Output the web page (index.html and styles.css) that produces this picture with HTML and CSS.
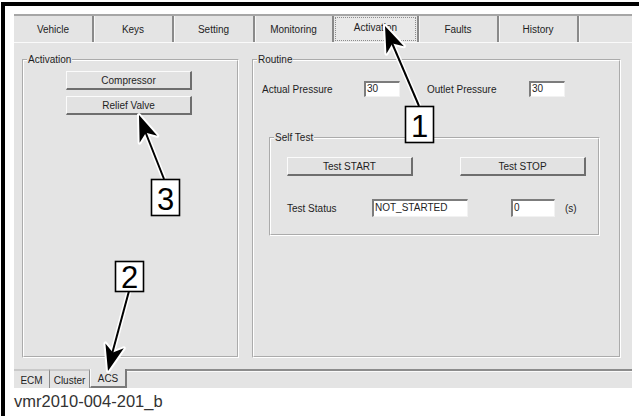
FILE: index.html
```html
<!DOCTYPE html>
<html>
<head>
<meta charset="utf-8">
<link rel="stylesheet" href="styles.css">
</head>
<body>
<div class="figure">
  <div class="window">
    <div class="tabs">
      <div class="tab w80">Vehicle</div>
      <div class="tab w80">Keys</div>
      <div class="tab w81">Setting</div>
      <div class="tab w79">Monitoring</div>
      <div class="tab w85 active"><span class="focus">Activation</span></div>
      <div class="tab w80">Faults</div>
      <div class="tab w80">History</div>
      <div class="tab-fill"></div>
    </div>
    <div class="page">
      <fieldset class="group group-left">
        <legend>Activation</legend>
        <div class="group-body left-body">
          <button class="btn btn-wide">Compressor</button>
          <button class="btn btn-wide">Relief Valve</button>
        </div>
      </fieldset>
      <fieldset class="group group-right">
        <legend>Routine</legend>
        <div class="group-body right-body">
          <div class="row">
            <span class="label lbl-pressure">Actual Pressure</span>
            <span class="field f36">30</span>
            <span class="label lbl-pressure gap27">Outlet Pressure</span>
            <span class="field f36">30</span>
          </div>
          <fieldset class="group selftest">
            <legend>Self Test</legend>
            <div class="group-body self-body">
              <div class="row btn-row">
                <button class="btn btn-wide">Test START</button>
                <button class="btn btn-wide">Test STOP</button>
              </div>
              <div class="row status-row">
                <span class="label lbl-status">Test Status</span>
                <span class="field f96 tall">NOT_STARTED</span>
                <span class="field f44 tall gap43">0</span>
                <span class="label unit">(s)</span>
              </div>
            </div>
          </fieldset>
        </div>
      </fieldset>
    </div>
    <div class="subtabs">
      <div class="subtab s36">ECM</div>
      <div class="subtab s40">Cluster</div>
      <div class="subtab s37 sub-active">ACS</div>
      <div class="subtab-fill"></div>
    </div>
  </div>
  <div class="caption">vmr2010-004-201_b</div>
</div>

<svg class="callouts" width="639" height="416" viewBox="0 0 639 416">
  <g class="halo">
    <line x1="419" y1="106" x2="392" y2="43"/>
    <line x1="164" y1="179" x2="145" y2="131"/>
    <line x1="129" y1="291" x2="112" y2="354"/>
    <path transform="translate(385 26) rotate(-113.03)" d="M0 0 L-26 -9.5 L-19 0 L-26 9.5 Z"/>
    <path transform="translate(139 115) rotate(-111.34)" d="M0 0 L-26 -9.5 L-19 0 L-26 9.5 Z"/>
    <path transform="translate(108 371) rotate(104.71)" d="M0 0 L-26 -9.5 L-19 0 L-26 9.5 Z"/>
  </g>
  <g class="ink">
    <line x1="419" y1="106" x2="392" y2="43"/>
    <line x1="164" y1="179" x2="145" y2="131"/>
    <line x1="129" y1="291" x2="112" y2="354"/>
    <path transform="translate(385 26) rotate(-113.03)" d="M0 0 L-26 -9.5 L-19 0 L-26 9.5 Z"/>
    <path transform="translate(139 115) rotate(-111.34)" d="M0 0 L-26 -9.5 L-19 0 L-26 9.5 Z"/>
    <path transform="translate(108 371) rotate(104.71)" d="M0 0 L-26 -9.5 L-19 0 L-26 9.5 Z"/>
  </g>
  <rect class="numbox" x="405.5" y="106.5" width="28" height="36"/>
  <text class="num" x="419.5" y="137">1</text>
  <rect class="numbox" x="151.5" y="179.5" width="28" height="36"/>
  <text class="num" x="165.5" y="210">3</text>
  <rect class="numbox" x="115.5" y="261.5" width="28" height="30"/>
  <text class="num" x="129.5" y="288">2</text>
</svg>
</body>
</html>
```

FILE: styles.css
```css
html, body {
  margin: 0;
  padding: 0;
  background: #fff;
}

body {
  width: 639px;
  height: 416px;
  overflow: hidden;
  position: relative;
  font-family: "Liberation Sans", Arial, sans-serif;
}

.figure {
  margin: 2px 0 0 1px;
  height: 414px;
  box-sizing: border-box;
  border-top: 4px solid #000;
  border-left: 4px solid #000;
  padding: 8px 0 0 9px;
}

.window {
  width: 618px;
  height: 374px;
  box-sizing: border-box;
  background: #e4e4e4;
  border-top: 2px solid #a6a6a6;
  display: flex;
  flex-direction: column;
  font-size: 10px;
  color: #1e1e1e;
}

/* top tabs */
.tabs {
  display: flex;
  height: 27px;
  box-sizing: border-box;
  border-bottom: 1px solid #fafafa;
}

.tab {
  box-sizing: border-box;
  height: 26px;
  display: flex;
  align-items: center;
  justify-content: center;
  border-right: 2px solid #8a8a8a;
  box-shadow: 1px 0 0 #f6f6f6;
  padding-top: 1px;
}

.w79 { width: 79px; }
.w80 { width: 80px; }
.w81 { width: 81px; }
.w85 { width: 85px; }

.tab.active {
  background: #e9e9e9;
  padding: 1px;
  align-items: stretch;
}

.focus {
  flex: 1;
  display: flex;
  justify-content: center;
  align-items: flex-start;
  padding-top: 4px;
  border: 1px dotted #8c8c8c;
}

.tab-fill {
  flex: 1;
}

/* page */
.page {
  height: 326px;
  box-sizing: border-box;
  display: flex;
  gap: 13px;
  padding: 11px 11px 11px 8px;
}

.group {
  margin: 0;
  padding: 0;
  min-width: 0;
  border: 2px groove #ffffff;
  box-sizing: border-box;
}

.group legend {
  margin-left: 3px;
  padding: 0 1px;
  font-size: 10px;
  line-height: 12px;
  color: #1e1e1e;
}

.group-left { width: 217px; }
.group-right { width: 369px; }

.group-body {
  display: flex;
  flex-direction: column;
}

.left-body {
  padding: 5px 0 0 42px;
  gap: 6px;
}

.right-body {
  padding: 15px 0 0 8px;
}

.row {
  display: flex;
  align-items: center;
}

.label {
  color: #1e1e1e;
  white-space: nowrap;
}

.lbl-pressure { width: 102px; }
.gap27 { margin-left: 27px; }
.gap43 { margin-left: 43px; }
.lbl-status { width: 85px; }
.unit { margin-left: 10px; }

.field {
  box-sizing: border-box;
  height: 16px;
  background: #fff;
  border-top: 2px solid #7c7c7c;
  border-left: 2px solid #7c7c7c;
  border-right: 1px solid #f2f2f2;
  border-bottom: 1px solid #f2f2f2;
  padding-left: 1px;
  line-height: 12px;
  font-size: 10px;
  color: #1e1e1e;
}

.field.tall {
  height: 18px;
  line-height: 13px;
}

.f36 { width: 36px; }
.f44 { width: 44px; }
.f96 { width: 96px; }

.btn {
  box-sizing: border-box;
  height: 19px;
  margin: 0;
  padding: 0;
  background: #e2e2e2;
  border-top: 1px solid #fbfbfb;
  border-left: 1px solid #fbfbfb;
  border-right: 2px solid #6e6e6e;
  border-bottom: 2px solid #6e6e6e;
  font-family: "Liberation Sans", Arial, sans-serif;
  font-size: 10px;
  color: #1e1e1e;
  text-align: center;
}

.btn-wide { width: 126px; }

.selftest {
  margin-top: 35px;
  margin-left: 7px;
  width: 331px;
}

.self-body {
  padding: 13px 0 17px 16px;
}

.btn-row {
  gap: 47px;
}

.status-row {
  margin-top: 23px;
}

/* bottom tabs */
.subtabs {
  height: 19px;
  display: flex;
}

.subtab {
  box-sizing: border-box;
  height: 19px;
  display: flex;
  align-items: center;
  justify-content: center;
  font-size: 10px;
  color: #1e1e1e;
}

.s36 { width: 36px; }
.s40 { width: 40px; }
.s37 { width: 37px; }

.subtab.s36, .subtab.s40 {
  border-top: 2px solid #c9c9c9;
  border-right: 1px solid #8a8a8a;
  padding-top: 1px;
}

.sub-active {
  border-left: 1px solid #fafafa;
  border-right: 2px solid #7a7a7a;
  border-bottom: 2px solid #7a7a7a;
  padding-top: 1px;
}

.subtab-fill {
  flex: 1;
  box-sizing: border-box;
  height: 19px;
  border-top: 2px solid #8c8c8c;
  box-shadow: inset 0 1px 0 #fafafa;
}

.caption {
  margin-top: 3px;
  font-size: 16.5px;
  line-height: 20px;
  color: #333;
  padding-left: 0;
}

/* callout overlay */
.callouts {
  position: absolute;
  left: 0;
  top: 0;
}

.halo line {
  stroke: #fff;
  stroke-width: 5;
}

.halo path {
  fill: #fff;
  stroke: #fff;
  stroke-width: 4;
  stroke-linejoin: round;
}

.ink line {
  stroke: #000;
  stroke-width: 2;
}

.ink path {
  fill: #000;
}

.numbox {
  fill: #fff;
  stroke: #000;
  stroke-width: 1.6;
}

.num {
  font-family: "Liberation Sans", Arial, sans-serif;
  font-size: 31px;
  text-anchor: middle;
  fill: #000;
}
```
